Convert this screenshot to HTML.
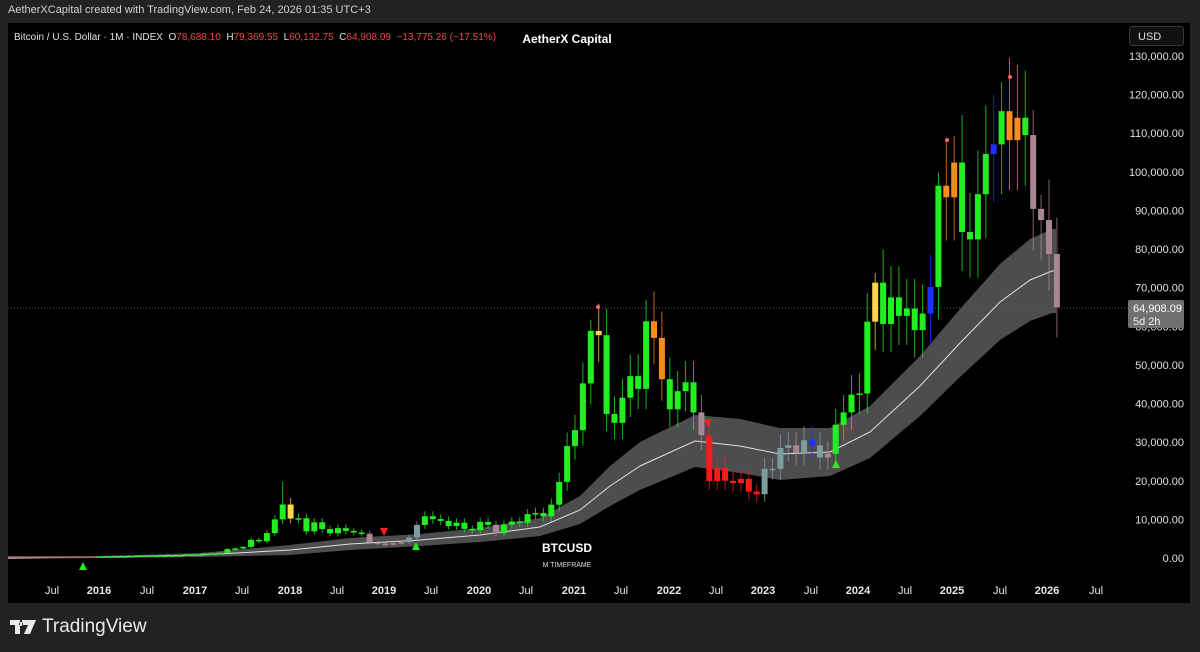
<!DOCTYPE html>
<html><head><meta charset="utf-8"><style>
html,body{margin:0;padding:0;width:1200px;height:652px;background:#222222;overflow:hidden;font-family:"Liberation Sans",sans-serif}
#hdr{position:absolute;left:8px;top:4px;font-size:11px;color:#d0d0d0}
#panel{position:absolute;left:8px;top:23px;width:1182px;height:580px;background:#000}
#logo{position:absolute;left:10px;top:616px;color:#e8e8e8;font-size:19px;display:flex;align-items:center;gap:6px}
</style></head><body>
<div id="hdr">AetherXCapital created with TradingView.com, Feb 24, 2026 01:35 UTC+3</div>
<div id="panel"></div>
<svg id="s" width="1200" height="652" style="position:absolute;left:0;top:0">
</svg>
<div id="logo"><svg width="26" height="16" viewBox="0 0 26 16"><path d="M0 1h10v14H5V6H0z M12 1h14l-6 14h-6l4-9h-6z M11 3a2 2 0 1 0 0.01 0z" fill="#e8e8e8"/></svg><span>TradingView</span></div>
<script>
(function(){
const S=document.getElementById('s');const NS='http://www.w3.org/2000/svg';
function el(t,a,txt){const e=document.createElementNS(NS,t);for(const k in a)e.setAttribute(k,a[k]);if(txt!==undefined)e.textContent=txt;S.appendChild(e);return e;}
const Y=p=>558-p*0.003862;
const mid=[[8,558,1],[100,557,1],[200,555,2],[290,550,5],[350,544,6],[420,540,6],[480,535,7],[540,527,9],[580,510,14],[610,486,20],[640,466,24],[695,441,26],[740,446,27],[780,454,26],[830,452,24],[870,432,26],[920,386,30],[960,343,34],[1000,302,38],[1030,280,41],[1052,271,42],[1056,271,42]];
const tp=mid.map(p=>p[0]+','+(p[1]-p[2])).join(' ');const bt=mid.slice().reverse().map(p=>p[0]+','+(p[1]+p[2])).join(' ');
el('polygon',{points:tp+' '+bt,fill:'#4d4d50'});
el('polyline',{points:mid.map(p=>p[0]+','+p[1]).join(' '),fill:'none',stroke:'#e0e0e0','stroke-width':1});
el('line',{x1:8,y1:308,x2:1128,y2:308,stroke:'#555','stroke-dasharray':'1 2'});
const C=[368,437,416,448,531,673,624,575,609,700,742,963,970,1190,1080,1350,2300,2480,2875,4700,4340,6450,10000,13850,10200,10300,6900,9240,7500,6400,7730,7000,6600,6300,4000,3740,3450,3820,4100,5320,8570,10800,10080,9600,8300,9150,7550,7200,9350,8600,6400,8650,9450,9140,11350,11650,10780,13800,19700,28990,33100,45200,58800,57700,37300,35000,41500,47100,43800,61300,57000,46300,38500,43200,45500,37700,31800,19900,23300,20000,19400,20500,17200,16500,23100,23100,28500,29200,27200,30500,29200,26000,27000,34500,37700,42300,42600,61200,71300,60600,67500,62700,64600,59000,63300,70200,96400,93400,102400,84400,82500,94200,104600,107100,115700,108200,114000,109500,90400,87500,78700,64900];
const H={23:19800,70:69000,69:66900,62:61700,98:73800,106:99800,107:108300,108:109300,114:123200,117:126200,118:116000,119:94000};
const G='#22ee22',O='#ff8c1a',Yl='#ffd54f',B='#1a33ff',R='#ff1a1a',T='#7f9c9c',P='#a88890';
const col={};
for(let i=0;i<C.length;i++)col[i]=G;
[70,71,107,108,115,116].forEach(i=>col[i]=O);
col[63]=Yl;col[98]=Yl;col[24]=Yl;
[105,113,90].forEach(i=>col[i]=B);
[77,78,79,80,81,82,83].forEach(i=>col[i]=R);
[84,85,86,87,89,91,39,40].forEach(i=>col[i]=T);
[76,88,92,118,119,120,121,34,35,36,37,38,50].forEach(i=>col[i]=P);
let prev=430;
for(let i=0;i<C.length;i++){
 const o=prev,c=C[i];prev=c;
 const X=101+i*7.9;
 const hi=H[i]||Math.max(o,c)*1.12, lo=Math.min(o,c)*0.88;
 const cl=col[i];
 el('line',{x1:X,y1:Y(hi),x2:X,y2:Y(lo),stroke:cl,'stroke-width':1,opacity:0.75});
 const t=Y(Math.max(o,c)),b=Y(Math.min(o,c));
 el('rect',{x:X-3,y:t,width:6,height:Math.max(1.5,b-t),fill:cl});
}
el('line',{x1:8,y1:557,x2:97,y2:557,stroke:'#a06060','stroke-width':1.5});
[[83,566],[416,546],[836,464]].forEach(p=>el('polygon',{points:`${p[0]-4},${p[1]+4} ${p[0]+4},${p[1]+4} ${p[0]},${p[1]-4}`,fill:'#22ee22'}));
[[384,532],[708,423]].forEach(p=>el('polygon',{points:`${p[0]-4},${p[1]-4} ${p[0]+4},${p[1]-4} ${p[0]},${p[1]+4}`,fill:'#ff2020'}));
[[598,307],[947,140],[1010,77]].forEach(p=>el('circle',{cx:p[0],cy:p[1],r:2,fill:'#ff6070'}));
const pr=[[130000,'130,000.00'],[120000,'120,000.00'],[110000,'110,000.00'],[100000,'100,000.00'],[90000,'90,000.00'],[80000,'80,000.00'],[70000,'70,000.00'],[60000,'60,000.00'],[50000,'50,000.00'],[40000,'40,000.00'],[30000,'30,000.00'],[20000,'20,000.00'],[10000,'10,000.00'],[0,'0.00']];
pr.forEach(p=>el('text',{x:1184,y:Y(p[0])+4,'text-anchor':'end','font-size':11,fill:'#e0e0e0'},p[1]));
el('rect',{x:1128,y:300,width:56,height:28,fill:'#707070',rx:2});
el('text',{x:1133,y:312,'font-size':11,fill:'#fff'},'64,908.09');
el('text',{x:1133,y:325,'font-size':11,fill:'#eee'},'5d 2h');
el('rect',{x:1129.5,y:26.5,width:54,height:19,rx:3,fill:'#111',stroke:'#3a3a3a'});
el('text',{x:1138,y:40,'font-size':11,fill:'#e0e0e0'},'USD');
const tl=[[52,'Jul'],[99,'2016'],[147,'Jul'],[195,'2017'],[242,'Jul'],[290,'2018'],[337,'Jul'],[384,'2019'],[431,'Jul'],[479,'2020'],[526,'Jul'],[574,'2021'],[621,'Jul'],[669,'2022'],[716,'Jul'],[763,'2023'],[811,'Jul'],[858,'2024'],[905,'Jul'],[952,'2025'],[1000,'Jul'],[1047,'2026'],[1096,'Jul']];
tl.forEach(t=>el('text',{x:t[0],y:594,'text-anchor':'middle','font-size':11,'font-weight':t[1]=='Jul'?'normal':'bold',fill:'#e8e8e8'},t[1]));
const lg=el('text',{x:14,y:40,'font-size':10,fill:'#e0e0e0'});
const parts=[['Bitcoin / U.S. Dollar · 1M · INDEX  O','#e0e0e0'],['78,688.10','#f04848'],['  H','#e0e0e0'],['79,369.55','#f04848'],['  L','#e0e0e0'],['60,132.75','#f04848'],['  C','#e0e0e0'],['64,908.09','#f04848'],['  −13,775.26 (−17.51%)','#f04848']];
parts.forEach(p=>{const t=document.createElementNS(NS,'tspan');t.setAttribute('fill',p[1]);t.setAttribute('style','white-space:pre');t.textContent=p[0];lg.appendChild(t);});
el('text',{x:567,y:43,'text-anchor':'middle','font-size':12,'font-weight':'bold',fill:'#fff'},'AetherX Capital');
el('text',{x:567,y:552,'text-anchor':'middle','font-size':12,'font-weight':'bold',fill:'#fff'},'BTCUSD');
el('text',{x:567,y:567,'text-anchor':'middle','font-size':7,fill:'#ddd'},'M TIMEFRAME');
})();
</script>
</body></html>
